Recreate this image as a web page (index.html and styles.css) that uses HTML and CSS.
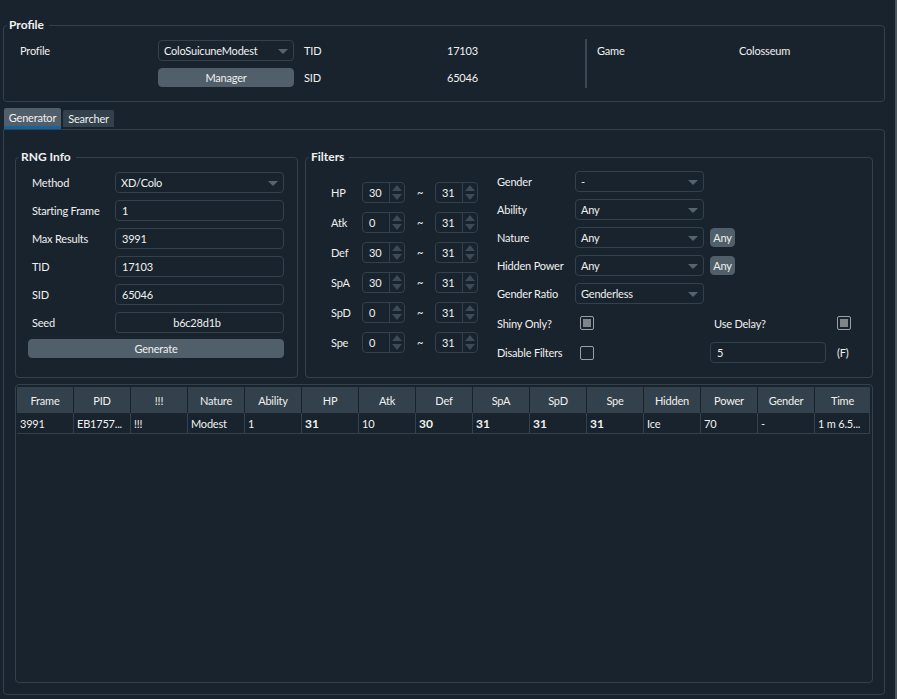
FILE: index.html
```html
<!DOCTYPE html>
<html>
<head>
<meta charset="utf-8">
<title>Generator</title>
<link rel="stylesheet" href="styles.css">
</head>
<body>
<div class="window">
  <fieldset class="group">
    <legend>Profile</legend>
    <div class="profile-grid">
      <span class="lbl">Profile</span>
      <div class="combo">ColoSuicuneModest<span class="arrow"></span></div>
      <span class="lbl pad10">TID</span>
      <span class="lbl">17103</span>
      <div class="vsep"></div>
      <span class="lbl">Game</span>
      <span class="lbl">Colosseum</span>
      <span></span>
      <button class="btn">Manager</button>
      <span class="lbl pad10">SID</span>
      <span class="lbl">65046</span>
    </div>
  </fieldset>

  <div class="tabbar">
    <div class="tab active">Generator</div>
    <div class="tab">Searcher</div>
  </div>

  <div class="pane">
    <div class="top-row">
      <fieldset class="group rng">
        <legend>RNG Info</legend>
        <div class="rng-grid">
          <span class="lbl">Method</span>
          <div class="combo">XD/Colo<span class="arrow"></span></div>
          <span class="lbl">Starting Frame</span>
          <div class="input">1</div>
          <span class="lbl">Max Results</span>
          <div class="input">3991</div>
          <span class="lbl">TID</span>
          <div class="input">17103</div>
          <span class="lbl">SID</span>
          <div class="input">65046</div>
          <span class="lbl">Seed</span>
          <div class="input center">b6c28d1b</div>
          <button class="btn generate">Generate</button>
        </div>
      </fieldset>

      <fieldset class="group filters">
        <legend>Filters</legend>
        <div class="filters-body">
          <div class="iv-grid">
            <span class="lbl">HP</span>
            <div class="spin"><span class="num">30</span><span class="spin-btns"><i class="up"></i><i class="down"></i></span></div>
            <span class="tilde">~</span>
            <div class="spin"><span class="num">31</span><span class="spin-btns"><i class="up"></i><i class="down"></i></span></div>

            <span class="lbl">Atk</span>
            <div class="spin"><span class="num">0</span><span class="spin-btns"><i class="up"></i><i class="down"></i></span></div>
            <span class="tilde">~</span>
            <div class="spin"><span class="num">31</span><span class="spin-btns"><i class="up"></i><i class="down"></i></span></div>

            <span class="lbl">Def</span>
            <div class="spin"><span class="num">30</span><span class="spin-btns"><i class="up"></i><i class="down"></i></span></div>
            <span class="tilde">~</span>
            <div class="spin"><span class="num">31</span><span class="spin-btns"><i class="up"></i><i class="down"></i></span></div>

            <span class="lbl">SpA</span>
            <div class="spin"><span class="num">30</span><span class="spin-btns"><i class="up"></i><i class="down"></i></span></div>
            <span class="tilde">~</span>
            <div class="spin"><span class="num">31</span><span class="spin-btns"><i class="up"></i><i class="down"></i></span></div>

            <span class="lbl">SpD</span>
            <div class="spin"><span class="num">0</span><span class="spin-btns"><i class="up"></i><i class="down"></i></span></div>
            <span class="tilde">~</span>
            <div class="spin"><span class="num">31</span><span class="spin-btns"><i class="up"></i><i class="down"></i></span></div>

            <span class="lbl">Spe</span>
            <div class="spin"><span class="num">0</span><span class="spin-btns"><i class="up"></i><i class="down"></i></span></div>
            <span class="tilde">~</span>
            <div class="spin"><span class="num">31</span><span class="spin-btns"><i class="up"></i><i class="down"></i></span></div>
          </div>

          <div class="opt-grid">
            <span class="lbl">Gender</span>
            <div class="combo">-<span class="arrow"></span></div>
            <span></span><span></span>

            <span class="lbl">Ability</span>
            <div class="combo">Any<span class="arrow"></span></div>
            <span></span><span></span>

            <span class="lbl">Nature</span>
            <div class="combo">Any<span class="arrow"></span></div>
            <button class="btn any">Any</button><span></span>

            <span class="lbl">Hidden Power</span>
            <div class="combo">Any<span class="arrow"></span></div>
            <button class="btn any">Any</button><span></span>

            <span class="lbl">Gender Ratio</span>
            <div class="combo">Genderless<span class="arrow"></span></div>
            <span></span><span></span>

            <span class="lbl">Shiny Only?</span>
            <span class="check checked"></span>
            <span class="lbl pad4">Use Delay?</span>
            <span class="check checked"></span>

            <span class="lbl">Disable Filters</span>
            <span class="check"></span>
            <div class="input">5</div>
            <span class="lbl">(F)</span>
          </div>
        </div>
      </fieldset>
    </div>

    <div class="results">
      <table class="grid">
        <thead>
          <tr>
            <th>Frame</th><th>PID</th><th>!!!</th><th>Nature</th><th>Ability</th><th>HP</th><th>Atk</th><th>Def</th><th>SpA</th><th>SpD</th><th>Spe</th><th>Hidden</th><th>Power</th><th>Gender</th><th class="last">Time</th>
          </tr>
        </thead>
        <tbody>
          <tr>
            <td>3991</td><td>EB1757...</td><td>!!!</td><td>Modest</td><td>1</td><td class="b">31</td><td>10</td><td class="b">30</td><td class="b">31</td><td class="b">31</td><td class="b">31</td><td>Ice</td><td>70</td><td>-</td><td>1 m 6.5...</td>
          </tr>
        </tbody>
      </table>
    </div>
  </div>
</div>
<div class="edge-gap"></div>
<div class="edge"></div>
</body>
</html>
```

FILE: styles.css
```css
* { box-sizing: border-box; }
html, body { margin: 0; padding: 0; background: #19232D; }
body {
  width: 897px; height: 699px; overflow: hidden;
  display: flex;
  font-family: Lato, "Noto Sans", sans-serif;
  font-size: 11px; letter-spacing: -0.2px; line-height: 16px; color: #F0F0F0;
}
.window {
  width: 885px; height: 699px;
  padding: 17px 0 4px 3px;
  display: flex; flex-direction: column;
}
.edge-gap { flex: 1; }
.edge { width: 2px; background: #4B565E; }

.group {
  margin: 0; padding: 0; min-width: 0;
  border: 1px solid #32414B; border-radius: 4px;
}
.group > legend {
  font-weight: bold; font-size: 12px; letter-spacing: 0; line-height: 16px;
  margin-left: 3px; padding: 0 5px 0 2px;
}

.lbl { align-self: center; white-space: nowrap; padding-top: 1px; }
.pad10 { padding-left: 10px; }
.pad4 { padding-left: 4px; }

.profile-grid {
  display: grid;
  grid-template-columns: 138px 136px 153px 138px 12px 142px 1fr;
  grid-template-rows: 21px 19px;
  row-gap: 7px;
  padding: 7px 0 14px 16px;
}
.vsep {
  grid-column: 5; grid-row: 1 / span 2;
  width: 2px; height: 49px; margin-top: -1px;
  background: #3A4853;
}

.combo, .input {
  display: flex; align-items: center;
  height: 21px;
  border: 1px solid #32414B; border-radius: 4px;
  background: #19232D;
  padding: 1px 5px 0 5px;
  white-space: nowrap;
}
.input { padding-left: 6px; }
.input.center { justify-content: center; padding-left: 0; }
.arrow {
  margin-left: auto;
  width: 0; height: 0;
  border-left: 5px solid transparent;
  border-right: 5px solid transparent;
  border-top: 5px solid #56646E;
}

.btn {
  font: inherit; color: #F0F0F0; letter-spacing: -0.2px;
  background: #505F69;
  border: 1px solid #505F69; border-radius: 4px;
  padding: 1px 0 0; height: 19px;
  display: flex; align-items: center; justify-content: center;
}

.tabbar {
  display: flex; gap: 2px;
  height: 21px; margin-top: 6px; padding-left: 1px;
}
.tab {
  height: 17px; margin-top: 2px; width: 51px;
  background: #32414B;
  border-radius: 2px 2px 0 0;
  text-align: center; line-height: 18px;
}
.tab.active {
  width: 57px; height: 21px; margin-top: 0;
  background: #505F69;
  border-bottom: 3px solid #1464A0;
  line-height: 19px;
}

.pane {
  flex: 1;
  border: 1px solid #32414B; border-radius: 0 4px 4px 4px;
  padding: 19px 11px 11px 11px;
  display: flex; flex-direction: column;
}
.top-row { display: flex; gap: 7px; align-items: stretch; }
.rng { width: 283px; }
.filters { width: 568px; }

.rng-grid {
  display: grid;
  grid-template-columns: 83px 169px;
  grid-auto-rows: 21px;
  row-gap: 7px;
  padding: 7px 0 0 16px;
}
.generate {
  grid-column: 1 / span 2;
  margin: -1px 0 0 -4px;
  height: 19px;
}

.filters-body {
  display: flex;
  padding: 6px 0 14px 25px;
}
.iv-grid {
  display: grid;
  grid-template-columns: 31px 43px 30px 43px;
  grid-auto-rows: 21px;
  row-gap: 9px;
  margin-top: 11px;
  align-self: flex-start;
}
.tilde { align-self: center; text-align: center; padding-top: 1px; }
.spin {
  display: flex; height: 21px;
  border: 1px solid #32414B; border-radius: 4px;
}
.spin .num { flex: 1; padding: 1px 0 0 6px; align-self: center; }
.spin-btns {
  width: 15px;
  border-left: 1px solid #32414B;
  display: flex; flex-direction: column; align-items: center; justify-content: center;
  gap: 3px;
}
.spin-btns .up, .spin-btns .down {
  width: 0; height: 0;
  border-left: 5px solid transparent;
  border-right: 5px solid transparent;
}
.spin-btns .up { border-bottom: 6px solid #3C4B56; }
.spin-btns .down { border-top: 6px solid #3C4B56; }

.opt-grid {
  display: grid;
  grid-template-columns: 78px 129px 122px 40px;
  grid-template-rows: 21px 21px 21px 21px 21px 24px 21px;
  column-gap: 0;
  row-gap: 7px;
  margin-left: 19px;
}
.opt-grid > :nth-child(4n+3) { margin-left: 6px; }
.opt-grid > :nth-child(4n) { margin-left: 11px; }
.any { width: 25px; align-self: center; }

.check {
  align-self: center; justify-self: start;
  width: 14px; height: 14px;
  margin-left: 5px;
  border: 1px solid #9A9FA3; border-radius: 2px;
  display: flex; align-items: center; justify-content: center;
}
.check.checked::after {
  content: ""; width: 8px; height: 8px; background: #7F868B;
}
.opt-grid > .check:nth-child(4n) { margin-left: 11px; }

.results {
  flex: 1; margin-top: 6px;
  border: 1px solid #32414B; border-radius: 4px;
  padding: 2px 1px;
}
.grid {
  border-collapse: separate; border-spacing: 0;
  table-layout: fixed; width: 853px;
}
.grid thead tr { height: 26px; }
.grid tbody tr { height: 21px; }
.grid th {
  width: 57px; height: 26px; padding: 2px 0 0;
  background: #32414B; font-weight: normal;
  text-align: center;
  border-right: 1px solid #19232D;
}
.grid th.last { width: 55px; border-right: none; }
.grid td {
  height: 21px; padding: 2px 3px 0;
  white-space: nowrap; overflow: hidden;
  border-right: 1px solid #32414B;
  border-bottom: 1px solid #32414B;
}
.grid td.b { font-weight: bold; font-size: 12px; letter-spacing: 0; }
```
